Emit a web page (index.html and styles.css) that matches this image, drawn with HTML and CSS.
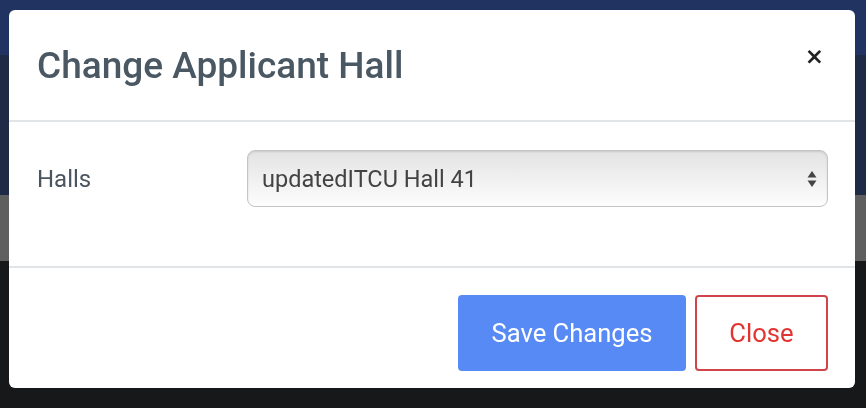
FILE: index.html
```html
<!DOCTYPE html>
<html lang="en">
<head>
    <meta charset="UTF-8">
    <meta name="viewport" content="width=device-width, initial-scale=1.0">
    <title>Change Applicant Hall</title>
    <link rel="stylesheet" href="styles.css">
</head>
<body>
    <div class="page">
        <div class="band band-nav"></div>
        <div class="band band-head"></div>
        <div class="band band-row"></div>
        <div class="band band-rest"></div>
    </div>

    <div class="modal">
        <div class="modal-header">
            <h2>Change Applicant Hall</h2>
            <button class="close-x" type="button">&times;</button>
        </div>
        <div class="modal-body">
            <div class="form-row">
                <label for="hall">Halls</label>
                <div class="select-box">
                    <span>updatedITCU Hall 41</span>
                    <svg class="arrows" width="10" height="20" viewBox="0 0 10 20">
                        <path d="M5 2 L9.5 8.5 L0.5 8.5 Z" fill="#444"/>
                        <path d="M5 18 L9.5 11.5 L0.5 11.5 Z" fill="#444"/>
                    </svg>
                </div>
            </div>
        </div>
        <div class="modal-footer">
            <button class="btn btn-save" type="button">Save Changes</button>
            <button class="btn btn-close" type="button">Close</button>
        </div>
    </div>
</body>
</html>
```

FILE: styles.css
```css
body {
    margin: 0;
    font-family: Roboto, "Liberation Sans", Arial, sans-serif;
    background: #17181a;
}
.page {
    display: flex;
    flex-direction: column;
}
.band-nav {
    height: 55px;
    background: #213461;
}
.band-head {
    height: 140px;
    background: #1e2a46;
}
.band-row {
    height: 66px;
    background: #5f5f5f;
}
.band-rest {
    height: 147px;
    background: #17181a;
}
.modal {
    position: fixed;
    top: 10px;
    left: 9px;
    width: 846px;
    height: 378px;
    background: #fff;
    border-radius: 6px;
    display: flex;
    flex-direction: column;
    overflow: hidden;
}
.modal-header {
    height: 110px;
    padding: 0 28px;
    display: flex;
    align-items: center;
    justify-content: space-between;
    border-bottom: 2px solid #e1e5e8;
}
.modal-header h2 {
    margin: 0;
    font-size: 37px;
    font-weight: 500;
    color: #4a5864;
}
.close-x {
    border: none;
    background: none;
    padding: 0;
    margin-right: 3px;
    margin-top: -18px;
    font-family: "DejaVu Sans", sans-serif;
    font-size: 23px;
    font-weight: bold;
    color: #222;
    cursor: pointer;
}
.modal-body {
    height: 144px;
    padding: 0 27px 0 28px;
    border-bottom: 2px solid #e1e5e8;
}
.form-row {
    display: flex;
    align-items: center;
    margin-top: 28px;
}
.form-row label {
    width: 210px;
    font-size: 24px;
    color: #4a5560;
}
.select-box {
    flex: 1;
    height: 57px;
    box-sizing: border-box;
    border: 1px solid #c4c4c4;
    border-radius: 8px;
    background: linear-gradient(#e3e3e3, #fdfdfd);
    box-shadow: inset 0 1px 2px rgba(0,0,0,0.12);
    display: flex;
    align-items: center;
    justify-content: space-between;
    padding: 0 10px 0 14px;
    font-size: 23.5px;
    color: #434343;
}
.arrows {
    display: block;
}
.modal-footer {
    flex: 1;
    display: flex;
    justify-content: flex-end;
    align-items: flex-start;
    gap: 9px;
    padding: 27px 27px 0 28px;
}
.btn {
    height: 76px;
    font-family: Roboto, "Liberation Sans", Arial, sans-serif;
    font-size: 25.6px;
    border-radius: 4px;
    cursor: pointer;
}
.btn-save {
    width: 228px;
    border: none;
    background: #588af6;
    color: #fff;
}
.btn-close {
    width: 133px;
    border: 2px solid #d0454c;
    background: #fff;
    color: #e03530;
}
```
